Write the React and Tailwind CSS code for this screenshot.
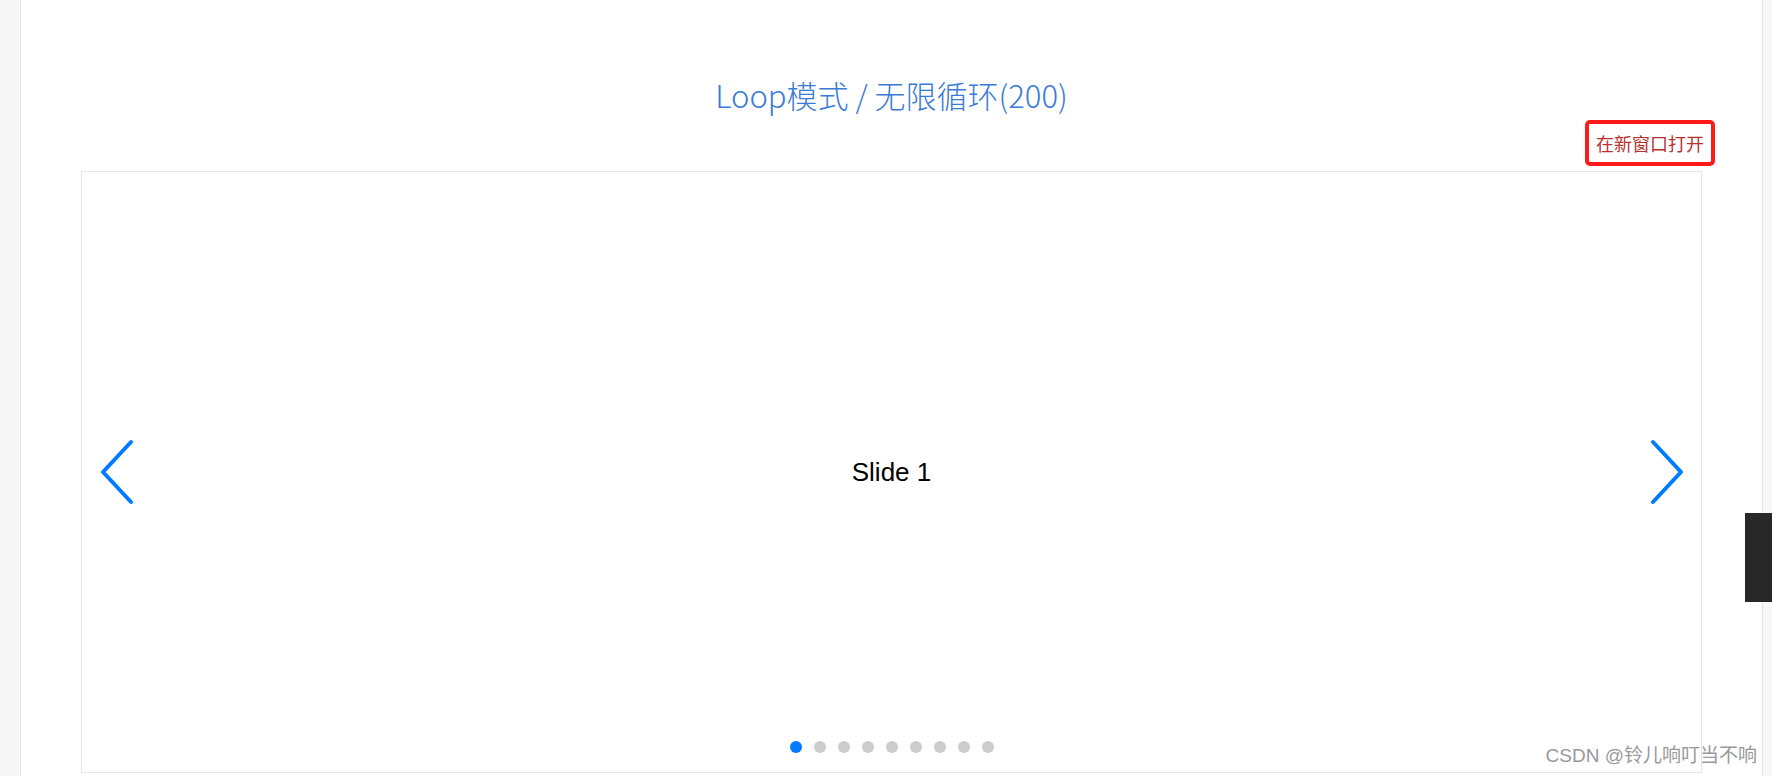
import React from "react";

const cjk = { fontFamily: '"Noto Sans CJK SC", "Noto Sans", sans-serif' };

const Chevron = ({ dir }) => (
  <svg width="40" height="68" viewBox="0 0 40 68" fill="none">
    <path
      d={dir === "left" ? "M34 4 L6 34 L34 64" : "M6 4 L34 34 L6 64"}
      stroke="#007aff"
      strokeWidth="4"
      strokeLinecap="round"
      strokeLinejoin="round"
    />
  </svg>
);

const App = () => {
  const dots = [0, 1, 2, 3, 4, 5, 6, 7, 8];

  return (
    <div className="relative flex h-[776px] w-full overflow-hidden bg-[#f7f7f7]">

      <div className="ml-[20px] mr-[9px] flex flex-1 flex-col border-x border-[#e6e6e6] bg-white">

        <h2
          className="mt-[75px] h-[42px] text-center text-[31px] font-light leading-[40px] text-[#3a7bd5]"
          style={cjk}
        >
          Loop模式 / 无限循环(200)
        </h2>

        <div className="mt-[3px] flex justify-end pr-[47px]">
          <a
            className="flex h-[46px] w-[130px] items-center justify-center rounded-[5px] border-[4px] border-[#ff1a1a] text-[18px] text-[#b8312f]"
            style={cjk}
          >
            在新窗口打开
          </a>
        </div>

        <div className="px-[60px] pt-[5px]">
          <div className="relative flex h-[602px] items-center justify-center border border-[#e6e6e6]">

            <div className="absolute left-[15px] top-1/2 -translate-y-1/2">
              <Chevron dir="left" />
            </div>

            <span
              className="text-[26px] text-black"
              style={{ fontFamily: '"Liberation Sans", Arial, sans-serif' }}
            >
              Slide 1
            </span>

            <div className="absolute right-[14px] top-1/2 -translate-y-1/2">
              <Chevron dir="right" />
            </div>

            <div className="absolute bottom-[19px] left-1/2 flex -translate-x-1/2 gap-[12px]">
              {dots.map((d) => (
                <span
                  key={d}
                  className={
                    d === 0
                      ? "h-[12px] w-[12px] rounded-full bg-[#007aff]"
                      : "h-[12px] w-[12px] rounded-full bg-[#cccccc]"
                  }
                />
              ))}
            </div>

          </div>
        </div>

      </div>

      <div className="absolute right-0 top-[513px] h-[89px] w-[27px] bg-[#282828]" />

      <div
        className="absolute right-[15px] top-[745px] text-[19px] leading-[21px] text-[#999999]"
        style={{ fontFamily: '"Liberation Sans", "Noto Sans CJK SC", sans-serif' }}
      >
        CSDN @铃儿响叮当不响
      </div>

    </div>
  );
};

export default App;
